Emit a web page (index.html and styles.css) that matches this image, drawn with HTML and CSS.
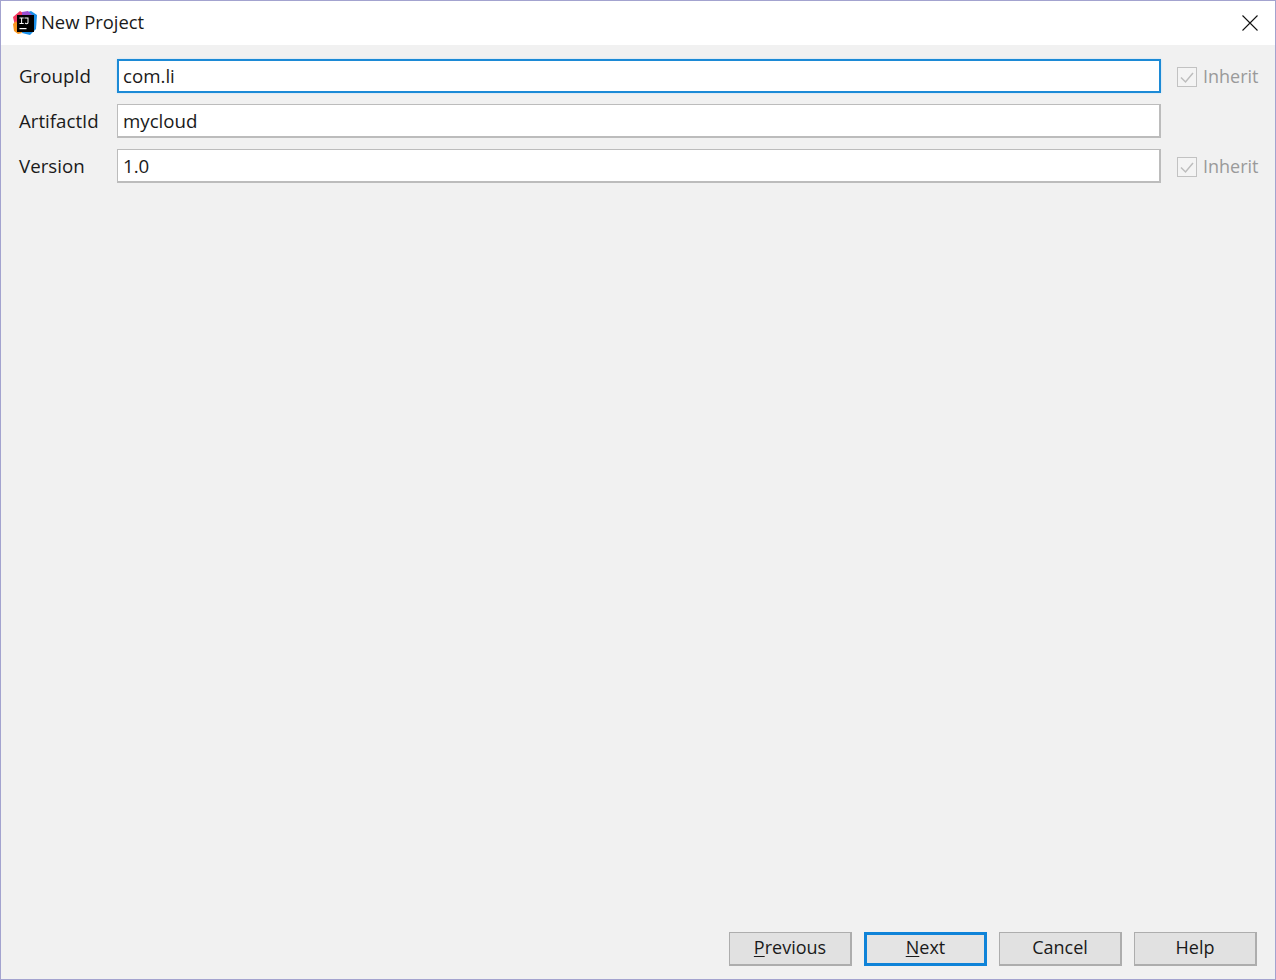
FILE: index.html
```html
<!DOCTYPE html>
<html lang="en">
<head>
<meta charset="utf-8">
<title>New Project</title>
<link rel="stylesheet" href="styles.css">
</head>
<body>
<div class="window">
  <header class="titlebar">
    <svg class="logo" width="24" height="24" viewBox="0 0 24 24" aria-hidden="true">
      <polygon points="0,6 7,0 13,4 8,21 3,19" fill="#f5395f"/>
      <polygon points="0,13 3,10 9,22 5,23 1,20" fill="#f7941e"/>
      <polygon points="12,2 18,0 24,4 23,18 17,24 9,22" fill="#1a8fe8"/>
      <polygon points="9,1 15,0 19,4 9,5" fill="#9a4fd0"/>
      <rect x="4" y="4" width="17" height="17" fill="#000"/>
      <path d="M6.500 6.500h4.200v1H9.100v4.600h1.600v1H6.500v-1h1.600V7.500H6.500zM11.500 6.500h4v5c0 1.100-.7 1.700-1.800 1.700-.9 0-1.600-.4-2-1l.7-.7c.3.400.7.700 1.200.700.6 0 .9-.3.900-.9V7.500H11.500z" fill="#fff"/>
      <rect x="6.500" y="17" width="7" height="1.200" fill="#fff"/>
    </svg>
    <span class="title">New Project</span>
    <svg class="close" width="16" height="16" viewBox="0 0 16 16" aria-hidden="true">
      <path d="M0.500 0.500L15.500 15.500M15.500 0.500L0.500 15.500" stroke="#111" stroke-width="1.100" fill="none"/>
    </svg>
  </header>
  <main class="content">
    <div class="form">
      <label class="label">GroupId</label>
      <div class="field focused">com.li</div>
      <div class="inherit"><span class="check"><svg width="20" height="20" viewBox="0 0 20 20" aria-hidden="true"><path d="M4 10.500L8.500 15L16 6" stroke="#bdbdbd" stroke-width="1.500" fill="none"/></svg></span><span>Inherit</span></div>
      <label class="label">ArtifactId</label>
      <div class="field">mycloud</div>
      <div class="inherit-empty"></div>
      <label class="label">Version</label>
      <div class="field">1.0</div>
      <div class="inherit"><span class="check"><svg width="20" height="20" viewBox="0 0 20 20" aria-hidden="true"><path d="M4 10.500L8.500 15L16 6" stroke="#bdbdbd" stroke-width="1.500" fill="none"/></svg></span><span>Inherit</span></div>
    </div>
    <footer class="buttons">
      <button class="btn"><u>P</u>revious</button>
      <button class="btn primary"><u>N</u>ext</button>
      <button class="btn">Cancel</button>
      <button class="btn">Help</button>
    </footer>
  </main>
</div>
</body>
</html>
```
FILE: styles.css
```css
* { box-sizing: border-box; }
html, body { margin: 0; height: 100%; }
body {
  font-family: "Open Sans", "Noto Sans", sans-serif;
  font-size: 18px;
  color: #1a1a1a;
  background: #f1f1f1;
}
.window {
  height: 980px;
  display: flex;
  flex-direction: column;
  border: 1px solid #a3a3cf;
  background: #f1f1f1;
}
.titlebar {
  height: 44px;
  flex: none;
  background: #fff;
  display: flex;
  align-items: center;
  padding: 0 17px 0 12px;
}
.logo { flex: none; margin-right: 5px; }
.title { flex: 1; font-size: 18.400px; line-height: 42px; height: 44px; margin-left: -1px; }
.close { flex: none; }
.content {
  flex: 1;
  display: flex;
  flex-direction: column;
  justify-content: space-between;
  padding: 14px 18px 13px 18px;
}
.form {
  display: grid;
  grid-template-columns: 98px 1044px 98px;
  grid-auto-rows: 34px;
  row-gap: 11px;
  align-items: center;
}
.label { line-height: 34px; font-size: 18.700px; }
.field {
  height: 34px;
  background: #fff;
  border: 2px solid #bcbcbc;
  border-width: 1px 2px 2px 1px;
  padding: 0 5px;
  line-height: 32px;
  font-size: 18.700px;
}
.field.focused {
  border: 2px solid #1c8ad6;
  padding: 0 4px;
  line-height: 30px;
  box-shadow: 0 0 2px #bfe0f7;
}
.inherit {
  display: flex;
  align-items: center;
  padding-left: 16px;
  color: #9a9a9a;
  gap: 6px;
}
.check {
  width: 20px;
  height: 20px;
  flex: none;
  margin-top: 2px;
  border: 1px solid #c2c2c2;
  background: #f4f4f4;
  display: block;
}
.check svg { display: block; margin: -1px; }
.buttons {
  display: flex;
  justify-content: flex-end;
  gap: 12px;
}
.btn {
  width: 123px;
  height: 34px;
  padding: 0 0 4px;
  font: inherit;
  color: #1a1a1a;
  background: #e1e1e1;
  border: 2px solid #adadad;
  border-width: 1px 2px 2px 1px;
}
.btn.primary {
  border: 3px solid #0f83d8;
  background: #e4e4e4;
  padding-bottom: 4px;
}
u { text-underline-offset: 2px; }
```
